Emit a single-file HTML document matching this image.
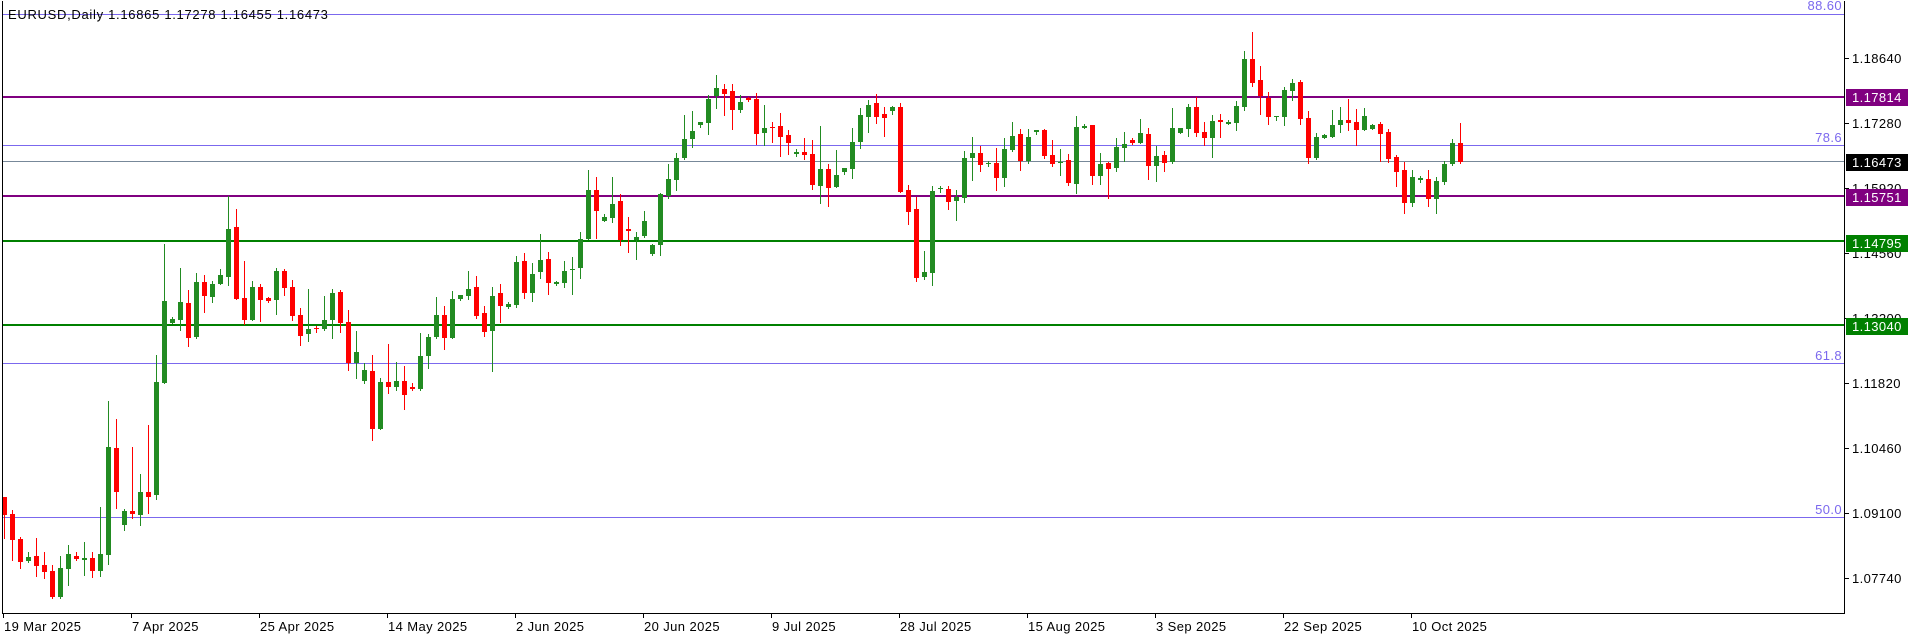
<!DOCTYPE html>
<html><head><meta charset="utf-8"><style>
html,body{margin:0;padding:0;background:#fff;width:1916px;height:640px;overflow:hidden}
svg{display:block}
text{font-family:"Liberation Sans",sans-serif;font-size:13px;letter-spacing:0.4px}
</style></head><body>
<svg id="s" width="1916" height="640" xmlns="http://www.w3.org/2000/svg">
<rect x="0" y="0" width="1916" height="640" fill="#fff"/>
<g id="lines">
<line x1="2" y1="14.5" x2="1844" y2="14.5" stroke="#7B68EE" stroke-width="1"/>
<line x1="2" y1="145.5" x2="1844" y2="145.5" stroke="#7B68EE" stroke-width="1"/>
<line x1="2" y1="363.5" x2="1844" y2="363.5" stroke="#7B68EE" stroke-width="1"/>
<line x1="2" y1="517.5" x2="1844" y2="517.5" stroke="#7B68EE" stroke-width="1"/>
<line x1="2" y1="161.5" x2="1844" y2="161.5" stroke="#778899" stroke-width="1"/>
<line x1="2" y1="97" x2="1844" y2="97" stroke="#800080" stroke-width="2"/>
<line x1="2" y1="196" x2="1844" y2="196" stroke="#800080" stroke-width="2"/>
<line x1="2" y1="241" x2="1844" y2="241" stroke="#008000" stroke-width="2"/>
<line x1="2" y1="325" x2="1844" y2="325" stroke="#008000" stroke-width="2"/>
</g>
<g id="c"></g>
<text x="1842" y="10" fill="#7B68EE" text-anchor="end">88.60</text>
<text x="1842" y="142" fill="#7B68EE" text-anchor="end">78.6</text>
<text x="1842" y="360" fill="#7B68EE" text-anchor="end">61.8</text>
<text x="1842" y="514" fill="#7B68EE" text-anchor="end">50.0</text>
<text x="8" y="19" fill="#000" style="letter-spacing:0.7px">EURUSD,Daily  1.16865 1.17278 1.16455 1.16473</text>
<line x1="2.5" y1="1" x2="2.5" y2="613" stroke="#000"/>
<line x1="1844.5" y1="1" x2="1844.5" y2="613" stroke="#000"/>
<line x1="2" y1="613.5" x2="1845" y2="613.5" stroke="#000"/>
<g id="ax"></g>
</svg>
<script>
var D=[
[497,515,497,538,'r'],[514,540,510,560,'r'],[539,562,537,568,'r'],[557,561,552,562,'g'],[556,566,538,576,'r'],[565,572,552,578,'r'],[571,597,565,598,'r'],[568,597,556,598,'g'],[554,569,545,585,'g'],[556,559,552,560,'r'],
[558,560,542,575,'g'],[558,571,552,577,'r'],[554,571,507,576,'g'],[447,555,401,564,'g'],[448,492,419,508,'r'],[511,525,509,530,'g'],[511,514,447,518,'r'],[492,515,474,525,'g'],[492,497,425,513,'r'],[382,495,355,499,'g'],
[301,383,244,383,'g'],[319,323,317,323,'g'],[302,320,268,330,'g'],[303,338,290,346,'r'],[282,337,273,338,'g'],[282,296,275,312,'r'],[284,297,281,302,'g'],[275,284,269,284,'g'],[229,277,196,285,'g'],[227,299,209,299,'r'],
[298,320,261,324,'r'],[287,320,281,320,'g'],[287,300,284,321,'r'],[298,301,297,302,'r'],[271,300,268,314,'g'],[271,288,269,295,'r'],[287,316,280,320,'r'],[315,336,308,345,'r'],[329,334,289,341,'g'],[328,329,326,332,'r'],
[320,329,296,330,'g'],[293,320,289,338,'g'],[292,323,290,332,'r'],[322,363,310,370,'r'],[352,363,331,378,'g'],[370,381,363,383,'g'],[371,429,355,440,'r'],[382,429,378,429,'g'],[382,387,344,393,'r'],[381,387,362,390,'g'],
[381,395,366,409,'r'],[387,389,383,390,'r'],[356,389,333,390,'g'],[337,356,334,368,'g'],[315,337,297,338,'g'],[315,338,306,349,'r'],[299,338,291,338,'g'],[295,299,295,300,'g'],[289,296,271,299,'g'],[287,316,276,318,'r'],
[313,332,306,336,'r'],[296,331,287,371,'g'],[293,306,284,322,'r'],[304,307,302,308,'g'],[262,305,256,307,'g'],[261,293,253,298,'r'],[274,293,263,301,'g'],[260,272,234,278,'g'],[259,283,252,294,'r'],[282,284,281,285,'g'],
[271,283,261,287,'g'],[269,270,257,294,'g'],[239,268,232,278,'g'],[190,239,170,239,'g'],[190,211,177,238,'r'],[217,221,214,221,'g'],[204,218,177,222,'g'],[201,240,194,245,'r'],[229,231,217,252,'r'],[237,240,232,259,'g'],
[221,236,211,237,'g'],[245,254,244,255,'g'],[194,245,193,255,'g'],[179,196,164,198,'g'],[158,180,153,190,'g'],[139,158,115,159,'g'],[131,139,111,147,'g'],[122,125,122,127,'g'],[99,123,95,134,'g'],[88,96,75,108,'g'],
[89,94,84,115,'r'],[91,110,84,129,'r'],[102,110,95,112,'g'],[98,100,97,101,'r'],[99,134,93,144,'r'],[128,133,105,145,'g'],[127,128,122,142,'r'],[126,137,113,156,'r'],[135,143,130,154,'r'],[152,154,149,156,'g'],
[152,155,138,159,'r'],[154,185,140,189,'r'],[169,186,126,203,'g'],[169,188,164,206,'r'],[175,187,150,187,'g'],[168,172,168,174,'g'],[142,169,128,178,'g'],[115,142,108,148,'g'],[105,117,100,132,'g'],[103,117,94,123,'r'],
[114,118,107,136,'r'],[107,111,106,114,'g'],[107,192,103,192,'r'],[190,212,185,224,'r'],[209,278,197,281,'r'],[272,277,251,279,'g'],[191,273,186,285,'g'],[188,189,186,192,'g'],[189,202,186,209,'r'],[197,201,190,220,'g'],
[158,198,151,202,'g'],[153,158,137,180,'g'],[153,165,146,171,'r'],[163,164,161,166,'g'],[163,178,148,190,'r'],[149,178,138,186,'g'],[136,150,122,151,'g'],[134,161,129,170,'r'],[137,161,129,163,'g'],[130,132,130,134,'g'],
[130,156,129,158,'r'],[155,164,140,166,'r'],[162,163,149,175,'g'],[160,183,154,185,'r'],[127,184,116,193,'g'],[126,128,124,128,'g'],[125,176,125,184,'r'],[164,176,153,184,'g'],[163,169,162,198,'r'],[147,168,138,171,'g'],
[144,148,132,161,'g'],[140,143,138,144,'r'],[133,143,119,143,'g'],[134,166,128,179,'r'],[156,166,146,181,'g'],[155,163,151,171,'r'],[128,162,108,163,'g'],[128,133,128,133,'g'],[107,129,104,136,'g'],[107,133,97,136,'r'],
[132,138,122,145,'r'],[121,138,115,157,'g'],[120,122,114,137,'r'],[122,124,120,124,'g'],[106,123,101,130,'g'],[59,107,51,110,'g'],[59,83,32,86,'r'],[80,96,66,114,'r'],[98,117,92,124,'r'],[116,117,116,120,'g'],
[90,117,87,125,'g'],[83,91,79,100,'g'],[82,119,80,124,'r'],[118,158,111,163,'r'],[137,158,133,159,'g'],[135,138,134,138,'g'],[125,137,110,137,'g'],[120,125,107,132,'g'],[120,123,99,130,'r'],[122,130,109,145,'r'],
[116,130,108,130,'g'],[125,129,124,129,'g'],[124,134,122,161,'r'],[132,159,129,162,'r'],[157,172,155,186,'r'],[170,203,162,213,'r'],[177,203,170,206,'g'],[178,180,176,182,'g'],[179,199,170,206,'r'],[181,199,177,213,'g'],
[164,182,161,184,'g'],[143,164,139,165,'g'],[143,162,123,163,'r']
];
var g=document.getElementById('c'),h='';
for(var i=0;i<D.length;i++){var d=D[i],x=4+8*i,col=d[4]=='g'?'#228B22':'#FF0000';
h+='<line x1="'+(x+0.5)+'" y1="'+d[2]+'" x2="'+(x+0.5)+'" y2="'+(d[3]+1)+'" stroke="'+col+'" stroke-width="1"/>';
var bh=Math.max(d[1]-d[0],1);
h+='<rect x="'+(x-2)+'" y="'+d[0]+'" width="5" height="'+bh+'" fill="'+col+'"/>';}
var ax='';
var P=[['1.18640',58],['1.17280',123],['1.15920',188],['1.14560',253],['1.13200',318],['1.11820',383],['1.10460',448],['1.09100',513],['1.07740',578]];
P.forEach(function(p){ax+='<line x1="1845" y1="'+(p[1]+0.5)+'" x2="1849" y2="'+(p[1]+0.5)+'" stroke="#000"/><text x="1852" y="'+(p[1]+5)+'" fill="#000">'+p[0]+'</text>';});
var B=[['1.17814',97,'#800080'],['1.16473',162,'#000'],['1.15751',197,'#800080'],['1.14795',243,'#008000'],['1.13040',326,'#008000']];
B.forEach(function(b){ax+='<rect x="1846" y="'+(b[1]-8)+'" width="62" height="17" fill="'+b[2]+'"/><text x="1852" y="'+(b[1]+5)+'" fill="#fff">'+b[0]+'</text>';});
var L=['19 Mar 2025','7 Apr 2025','25 Apr 2025','14 May 2025','2 Jun 2025','20 Jun 2025','9 Jul 2025','28 Jul 2025','15 Aug 2025','3 Sep 2025','22 Sep 2025','10 Oct 2025'];
L.forEach(function(t,k){var x=3+128*k;ax+='<line x1="'+(x+0.5)+'" y1="613" x2="'+(x+0.5)+'" y2="618" stroke="#000"/><text x="'+(x+1)+'" y="631" fill="#000">'+t+'</text>';});
g.innerHTML=h;document.getElementById('ax').innerHTML=ax;
</script>
</body></html>
